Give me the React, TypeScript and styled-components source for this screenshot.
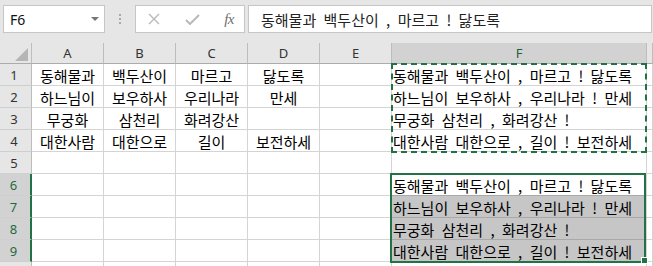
import React from 'react'
import styled, { createGlobalStyle } from 'styled-components'

const GREEN = '#217346'
const GRID = '#d4d4d4'
const HEAD_BG = '#e6e6e6'
const HEAD_SEL = '#d2d2d2'

const GlobalStyle = createGlobalStyle`
  html, body { margin: 0; padding: 0; overflow: hidden; background: #fff; }
  body { font-family: 'Noto Sans', 'Noto Sans CJK KR', sans-serif; }
  * { box-sizing: border-box; }
`

// G is only a sliver at the right edge, its letter falls outside the window
const columns = ['A', 'B', 'C', 'D', 'E', 'F', '']

const verses: string[][] = [
  ['동해물과', '백두산이', '마르고', '닳도록'],
  ['하느님이', '보우하사', '우리나라', '만세'],
  ['무궁화', '삼천리', '화려강산', ''],
  ['대한사람', '대한으로', '길이', '보전하세']
]

const joinVerse = (v: string[]) =>
  `${v[0]} ${v[1]} , ${v[2]} !${v[3] ? ' ' + v[3] : ''}`

const App = () => {
  const rows = Array.from({ length: 10 }, (_, i) => i + 1)

  const cellText = (row: number, col: number) => {
    if (row <= 4 && col < 4) return verses[row - 1][col]
    if (row <= 4 && col === 5) return joinVerse(verses[row - 1])
    if (row >= 6 && row <= 9 && col === 5) return joinVerse(verses[row - 6])
    return ''
  }

  return (
    <>
      <GlobalStyle />
      <FormulaBar>
        <NameBox>
          <span>F6</span>
          <Caret />
        </NameBox>
        <Grip>
          <Dot />
          <Dot />
          <Dot />
        </Grip>
        <FxButtons>
          <svg width='12' height='12' viewBox='0 0 12 12'>
            <path d='M1 1 11 11M11 1 1 11' stroke='#b9b9b9' strokeWidth='1.4' fill='none' />
          </svg>
          <svg width='15' height='11' viewBox='0 0 15 11'>
            <path d='M1 6l4 4 9-9' stroke='#b9b9b9' strokeWidth='2' fill='none' />
          </svg>
          <Fx>fx</Fx>
        </FxButtons>
        <FormulaInput>{joinVerse(verses[0])}</FormulaInput>
      </FormulaBar>

      <Sheet>
        <Corner>
          <svg width='13' height='13' viewBox='0 0 13 13'>
            <polygon points='13,0 13,13 0,13' fill='#b5b5b5' />
          </svg>
        </Corner>
        {columns.map((c, i) => (
          <ColHead key={i} $col={i + 2} $sel={c === 'F'}>
            {c}
          </ColHead>
        ))}
        {rows.map(r => (
          <React.Fragment key={r}>
            <RowHead $row={r + 1} $sel={r >= 6 && r <= 9}>
              {r < 10 ? r : ''}
            </RowHead>
            {columns.map((c, ci) => (
              <Cell
                key={ci}
                $row={r + 1}
                $col={ci + 2}
                $left={ci === 5}
                $sel={ci === 5 && r >= 7 && r <= 9}
              >
                {cellText(r, ci)}
              </Cell>
            ))}
          </React.Fragment>
        ))}
        <Marquee />
        <Selection>
          <FillHandle />
        </Selection>
      </Sheet>
    </>
  )
}

const FormulaBar = styled.div`
  height: 43px;
  background: ${HEAD_BG};
  display: flex;
  align-items: flex-start;
  padding: 5px 1px 0 3px;
`
const NameBox = styled.div`
  width: 102px;
  height: 28px;
  background: #fff;
  border: 1px solid #c6c6c6;
  display: flex;
  align-items: center;
  justify-content: space-between;
  padding: 0 5px 0 6px;
  font: 14px 'Noto Sans', sans-serif;
  color: #111;
`
const Caret = styled.span`
  width: 0;
  height: 0;
  border-left: 4px solid transparent;
  border-right: 4px solid transparent;
  border-top: 4px solid #777;
`
const Grip = styled.div`
  width: 30px;
  height: 28px;
  display: flex;
  flex-direction: column;
  align-items: center;
  justify-content: center;
  gap: 2px;
`
const Dot = styled.span`
  width: 2px;
  height: 2px;
  background: #a9a9a9;
`
const FxButtons = styled.div`
  width: 110px;
  height: 28px;
  background: #fff;
  border: 1px solid #c6c6c6;
  display: flex;
  align-items: center;
  justify-content: space-between;
  padding: 0 10px 0 12px;
  margin-right: 3px;
`
const Fx = styled.span`
  font: italic 15px 'Liberation Serif', serif;
  color: #6f6f6f;
  letter-spacing: -0.5px;
`
const FormulaInput = styled.div`
  flex: 1;
  height: 28px;
  background: #fff;
  border: 1px solid #c6c6c6;
  display: flex;
  align-items: center;
  padding-left: 12px;
  font: 15px 'Noto Sans CJK KR', sans-serif;
  word-spacing: 4px;
  color: #222;
  white-space: pre;
`

const Sheet = styled.div`
  display: grid;
  grid-template-columns: 32px repeat(5, 72px) 255px 1fr;
  grid-template-rows: 21px;
  grid-auto-rows: 22px;
`
const Corner = styled.div`
  grid-row: 1;
  grid-column: 1;
  background: ${HEAD_BG};
  border-right: 1px solid #bdbdbd;
  border-bottom: 1px solid #ababab;
  display: flex;
  align-items: flex-end;
  justify-content: flex-end;
  padding: 0 3px 2px 0;
`
const ColHead = styled.div<{ $col: number; $sel?: boolean }>`
  grid-row: 1;
  grid-column: ${p => p.$col};
  background: ${p => (p.$sel ? HEAD_SEL : HEAD_BG)};
  color: ${p => (p.$sel ? '#1f5f3c' : '#333')};
  border-right: 1px solid #bdbdbd;
  border-bottom: 1px solid #ababab;
  display: flex;
  align-items: center;
  justify-content: center;
  font: 13px 'Noto Sans', sans-serif;
`
const RowHead = styled.div<{ $row: number; $sel?: boolean }>`
  grid-row: ${p => p.$row};
  grid-column: 1;
  background: ${p => (p.$sel ? HEAD_SEL : HEAD_BG)};
  color: ${p => (p.$sel ? '#1f6b40' : '#333')};
  border-right: ${p => (p.$sel ? `2px solid ${GREEN}` : '1px solid #bdbdbd')};
  border-bottom: 1px solid #cfcfcf;
  display: flex;
  align-items: center;
  justify-content: center;
  padding-right: 3px;
  font: 13px 'Noto Sans', sans-serif;
`
const Cell = styled.div<{ $row: number; $col: number; $left?: boolean; $sel?: boolean }>`
  grid-row: ${p => p.$row};
  grid-column: ${p => p.$col};
  background: ${p => (p.$sel ? '#c6c6c6' : '#fff')};
  border-right: 1px solid ${GRID};
  border-top: ${p => (p.$sel ? '1px solid #a9a9a9' : 'none')};
  border-bottom: 1px solid ${GRID};
  margin-top: ${p => (p.$sel ? '-1px' : '0')};
  display: flex;
  align-items: center;
  justify-content: ${p => (p.$left ? 'flex-start' : 'center')};
  padding: 1px 1px 0;
  font: 15px 'Noto Sans CJK KR', sans-serif;
  word-spacing: 4px;
  line-height: 1;
  color: #000;
  white-space: pre;
  overflow: hidden;
`
const Marquee = styled.div`
  grid-row: 2 / 6;
  grid-column: 7;
  margin: -1px 0 -1px -1px;
  border: 2px dashed ${GREEN};
  z-index: 1;
  pointer-events: none;
`
const Selection = styled.div`
  grid-row: 7 / 11;
  grid-column: 7;
  margin: -1px 1px -1px -2px;
  border: 2px solid ${GREEN};
  position: relative;
  z-index: 1;
  pointer-events: none;
`
const FillHandle = styled.span`
  position: absolute;
  right: -4px;
  bottom: -3px;
  width: 7px;
  height: 7px;
  background: ${GREEN};
  border: 1px solid #fff;
`

export default App
